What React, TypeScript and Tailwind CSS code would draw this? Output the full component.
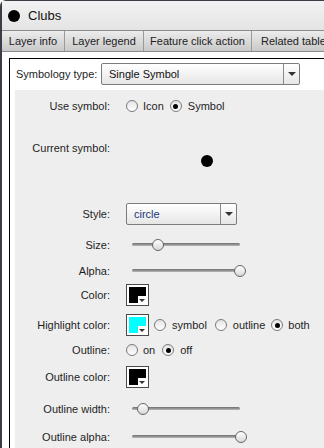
import React from 'react';

const font = "font-['Liberation_Sans',Arial,sans-serif]";

function Radio({ checked }: { checked?: boolean }) {
  return (
    <span className="relative inline-flex h-[12px] w-[12px] shrink-0 items-center justify-center rounded-full border border-[#7a7a7a] bg-gradient-to-b from-[#e4e4e4] to-white">
      {checked && <span className="h-[5px] w-[5px] rounded-full bg-black" />}
    </span>
  );
}

function Slider({ thumb }: { thumb: number }) {
  // thumb: centre of the knob in px from the track start
  return (
    <div className="relative ml-[6px] h-[14px] w-[116px]">
      <div className="absolute left-0 top-[5px] h-[3px] w-[108px] rounded-full bg-gradient-to-b from-[#6e6e6e] to-[#b8b8b8]" />
      <div
        className="absolute top-[1px] h-[12px] w-[12px] rounded-full border border-[#666] bg-gradient-to-b from-white to-[#d8d8d8]"
        style={{ left: thumb - 6 }}
      />
    </div>
  );
}

function Swatch({ color }: { color: string }) {
  return (
    <div className="relative h-[22px] w-[23px] border border-[#4a4a4a] bg-white p-[2px]">
      <div className="h-full w-full" style={{ background: color }} />
      <div className="absolute bottom-[2px] right-[2px] flex h-[7px] w-[8px] items-end justify-center bg-white pb-[1px]">
        <div className="h-0 w-0 border-x-[3px] border-t-[3px] border-x-transparent border-t-[#333]" />
      </div>
    </div>
  );
}

function Select({ text, width, textClass }: { text: string; width: string; textClass: string }) {
  return (
    <div className={`flex h-[22px] ${width} items-stretch rounded-[2px] border border-[#7c7c7c] bg-gradient-to-b from-white to-[#e6e6e6]`}>
      <div className={`flex flex-1 items-center pl-[7px] text-[11px] ${textClass}`}>{text}</div>
      <div className="flex w-[16px] items-center justify-center border-l border-[#8a8a8a]">
        <div className="h-0 w-0 border-x-[4px] border-t-[4px] border-x-transparent border-t-[#333]" />
      </div>
    </div>
  );
}

function Row({ label, mt, children }: { label: string; mt: string; children?: React.ReactNode }) {
  return (
    <div className={`flex h-[22px] items-center ${mt}`}>
      <div className="w-[95px] shrink-0 text-right">{label}</div>
      <div className="ml-[16px] flex items-center">{children}</div>
    </div>
  );
}

const tabs = [
  { label: 'Layer info', w: 'w-[63px] justify-center' },
  { label: 'Layer legend', w: 'w-[79px] justify-center' },
  { label: 'Feature click action', w: 'w-[108px] justify-center' },
  { label: 'Related table', w: 'w-[90px] justify-start pl-[9px]' },
];

export default function App() {
  return (
    <div className={`h-[448px] w-[324px] overflow-hidden bg-white text-[11px] text-[#1e1e1e] ${font}`}>
      <div className="flex h-full flex-col rounded-tl-[6px] border-l-2 border-t border-[#3a3e44]">
        <div className="flex h-[30px] items-center bg-gradient-to-b from-[#f2f2f2] to-[#e4e4e4] pl-[6px]">
          <span className="h-[12px] w-[12px] rounded-full bg-black" />
          <span className="ml-[8px] text-[13px] text-[#111]">Clubs</span>
        </div>

        <div className="flex h-[22px] border-y border-[#8c8c8c] bg-gradient-to-b from-[#ececec] to-[#c9c9c9]">
          {tabs.map((t) => (
            <div
              key={t.label}
              className={`flex ${t.w} shrink-0 items-center whitespace-nowrap border-r border-[#9a9a9a] text-[11px] text-[#222]`}
            >
              {t.label}
            </div>
          ))}
        </div>

        <div className="flex flex-1 flex-col pl-[7px] pt-[6px]">
          <div className="flex flex-1 flex-col border-l border-t border-black pl-[5px] pt-[4px]">
            <div className="flex items-center pl-[1px]">
              <span className="w-[85px] whitespace-nowrap">Symbology type:</span>
              <Select text="Single Symbol" width="w-[199px]" textClass="text-[#111]" />
            </div>

            <div className="mt-[5px] flex-1 bg-[#eeeeee] pt-[5px]">
              <Row label="Use symbol:" mt="mt-0">
                <Radio />
                <span className="ml-[5px]">Icon</span>
                <span className="ml-[6px]" />
                <Radio checked />
                <span className="ml-[6px]">Symbol</span>
              </Row>

              <div className="flex h-[86px]">
                <div className="w-[95px] shrink-0 pt-[23px] text-right">Current symbol:</div>
                <div className="ml-[16px] flex w-[162px] justify-center pt-[38px]">
                  <span className="h-[12px] w-[12px] rounded-full bg-black" />
                </div>
              </div>

              <Row label="Style:" mt="mt-0">
                <Select text="circle" width="w-[111px]" textClass="text-[#1b357a]" />
              </Row>
              <Row label="Size:" mt="mt-[9px]">
                <Slider thumb={26} />
              </Row>
              <Row label="Alpha:" mt="mt-[4px]">
                <Slider thumb={108} />
              </Row>
              <Row label="Color:" mt="mt-[2px]">
                <Swatch color="#000000" />
              </Row>
              <Row label="Highlight color:" mt="mt-[8px]">
                <Swatch color="#00ffff" />
                <span className="ml-[5px]" />
                <Radio />
                <span className="ml-[6px]">symbol</span>
                <span className="ml-[8px]" />
                <Radio />
                <span className="ml-[6px]">outline</span>
                <span className="ml-[6px]" />
                <Radio checked />
                <span className="ml-[5px]">both</span>
              </Row>
              <Row label="Outline:" mt="mt-[3px]">
                <Radio />
                <span className="ml-[5px]">on</span>
                <span className="ml-[7px]" />
                <Radio checked />
                <span className="ml-[6px]">off</span>
              </Row>
              <Row label="Outline color:" mt="mt-[5px]">
                <Swatch color="#000000" />
              </Row>
              <Row label="Outline width:" mt="mt-[10px]">
                <Slider thumb={11} />
              </Row>
              <Row label="Outline alpha:" mt="mt-[6px]">
                <Slider thumb={109} />
              </Row>
            </div>
          </div>
        </div>
      </div>
    </div>
  );
}
